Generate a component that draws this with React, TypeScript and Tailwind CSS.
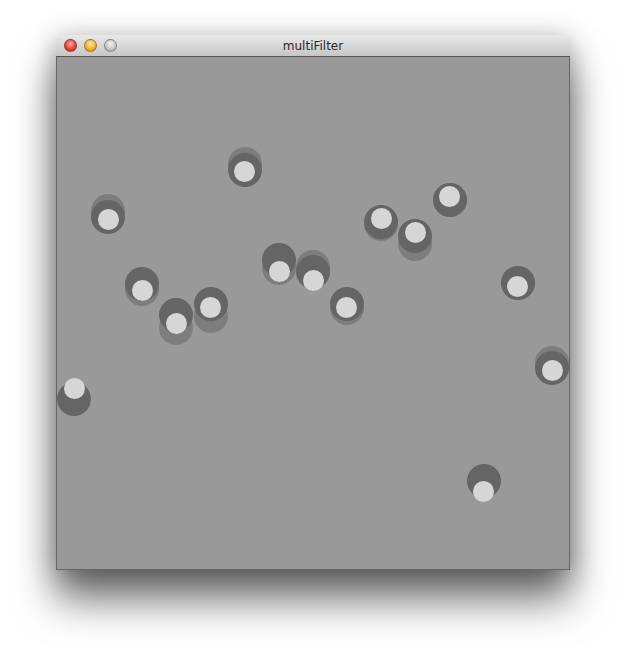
import React from 'react';

// [darkX, darkY, ghostX, ghostY, lightX, lightY] in page coords; ghost null = none
type Ball = [number, number, number | null, number | null, number, number];

const balls: Ball[] = [
  [245, 170, 245, 164, 244.5, 171.5],
  [108, 217, 108, 211, 108.5, 219],
  [142, 284, 142, 289, 142.5, 290],
  [176, 315, 176, 328, 176.5, 323],
  [210.5, 304, 210.5, 316, 210.5, 307.5],
  [279, 260, 279, 268, 279, 271],
  [313, 272, 313, 267, 313, 280],
  [347, 304, 347, 308, 346.5, 307],
  [381, 222, 381, 224, 381, 218.5],
  [415, 235.5, 415, 244, 415.5, 232],
  [450, 200, 450, 200, 449.5, 196.5],
  [74, 399, null, null, 74, 388],
  [518, 282.5, 518, 283, 517.5, 286.5],
  [552, 368, 552, 363, 552, 370.5],
  [484, 481, null, null, 483.5, 491.5],
];

const OX = 57;
const OY = 57;
const DARK = 34;
const LIGHT = 21;

function Light({ color }: { color: string }) {
  return <div className={`h-[13px] w-[13px] rounded-full border border-black/30 ${color}`} />;
}

export default function App() {
  return (
    <div className="min-h-[648px] w-[626px] bg-white pl-[56px] pt-[35px]">
      <div className="flex w-[514px] flex-col rounded-t-[4px] shadow-[0_30px_40px_rgba(0,0,0,0.55),0_4px_28px_rgba(0,0,0,0.3)]">
        {/* Title bar */}
        <div className="relative flex h-[22px] items-center gap-[7px] rounded-t-[4px] border-b border-[#555] bg-[linear-gradient(#e9e9e9,#c6c6c6)] pl-[8px]">
          <Light color="bg-[radial-gradient(circle_at_50%_35%,#ffb0a8,#e8453e_55%,#b8201b)]" />
          <Light color="bg-[radial-gradient(circle_at_50%_35%,#ffe7a8,#f2b338_55%,#c98412)]" />
          <Light color="bg-[radial-gradient(circle_at_50%_35%,#f4f4f4,#c8c8c8_55%,#9a9a9a)]" />
          <div className="absolute inset-0 flex items-center justify-center text-[12px] text-[#2a2a2a] [font-family:'DejaVu_Sans',sans-serif]">
            multiFilter
          </div>
        </div>
        {/* Canvas */}
        <div className="border-x border-b border-[#666] bg-[#999]">
          <div className="relative h-[512px] w-[512px] overflow-hidden bg-[#999999]">
            {balls.map(([dx, dy, gx, gy, lx, ly], i) => (
              <React.Fragment key={i}>
                {gx !== null && gy !== null && (
                  <div
                    className="absolute rounded-full bg-[#7d7d7d]"
                    style={{ left: gx - OX - DARK / 2, top: gy - OY - DARK / 2, width: DARK, height: DARK }}
                  />
                )}
                <div
                  className="absolute rounded-full bg-[#656565]"
                  style={{ left: dx - OX - DARK / 2, top: dy - OY - DARK / 2, width: DARK, height: DARK }}
                />
                <div
                  className="absolute rounded-full bg-[#d6d6d6]"
                  style={{ left: lx - OX - LIGHT / 2, top: ly - OY - LIGHT / 2, width: LIGHT, height: LIGHT }}
                />
              </React.Fragment>
            ))}
          </div>
        </div>
      </div>
    </div>
  );
}
